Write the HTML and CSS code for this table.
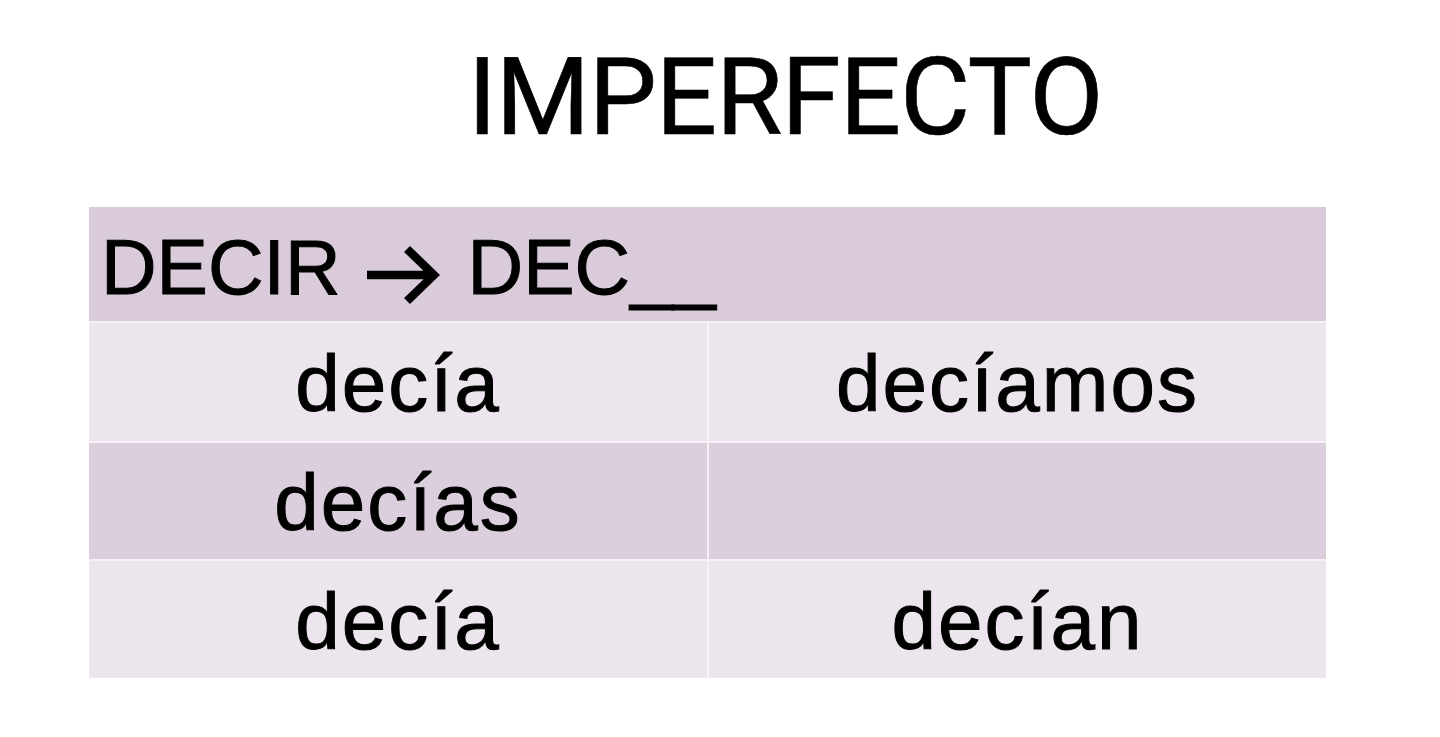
FILE: index.html
```html
<!DOCTYPE html>
<html lang="es">
<head>
<meta charset="utf-8">
<title>Imperfecto</title>
<link rel="stylesheet" href="styles.css">
</head>
<body>
<div class="slide">
  <h1 class="title">IMPERFECTO</h1>
  <div class="table">
    <div class="cell head"><span>DECIR</span><svg class="arrow" width="74" height="60" viewBox="0 0 74 60" aria-label="→"><path d="M1 30 H66 M41 4 L68 30 L41 56" fill="none" stroke="#000" stroke-width="8.5" stroke-linejoin="miter"/></svg><span>DEC__</span></div>
    <div class="cell light">decía</div>
    <div class="cell light">decíamos</div>
    <div class="cell dark">decías</div>
    <div class="cell dark"></div>
    <div class="cell light">decía</div>
    <div class="cell light">decían</div>
  </div>
</div>
</body>
</html>
```
FILE: styles.css
```css
html, body {
  margin: 0;
  padding: 0;
  background: #ffffff;
}
.slide {
  width: 1440px;
  height: 737px;
  overflow: hidden;
  display: flex;
  flex-direction: column;
}
.title {
  margin: 43px 0 0 0;
  padding-left: 130px;
  text-align: center;
  font-family: Roboto, "Liberation Sans", sans-serif;
  font-weight: 400;
  font-size: 108px;
  line-height: 108px;
  letter-spacing: -1.2px;
  color: #000;
  -webkit-text-stroke: 0.6px #000;
}
.table {
  margin: 56px 0 0 89px;
  width: 1237px;
  display: grid;
  grid-template-columns: 618px 617px;
  grid-template-rows: 114px 118px 116px 117px;
  gap: 2px;
  background: #f7f0f7;
}
.cell {
  display: flex;
  align-items: center;
  justify-content: center;
  font-family: "Liberation Sans", Arial, sans-serif;
  font-size: 80px;
  line-height: 1;
  letter-spacing: 2px;
  color: #000;
  -webkit-text-stroke: 1px #000;
  padding-top: 4px;
  box-sizing: border-box;
}
.head {
  grid-column: 1 / span 2;
  justify-content: flex-start;
  align-items: baseline;
  padding-left: 12px;
  padding-top: 22px;
  font-size: 77px;
  letter-spacing: 0;
  background: #d9cbda;
}
.arrow {
  flex: none;
  width: 74px;
  height: 60px;
  margin: 0 28px 0 25px;
  align-self: center;
  position: relative;
  top: 0;
}
.light {
  background: #ede5ee;
}
.dark {
  background: #dccfdd;
}
```
